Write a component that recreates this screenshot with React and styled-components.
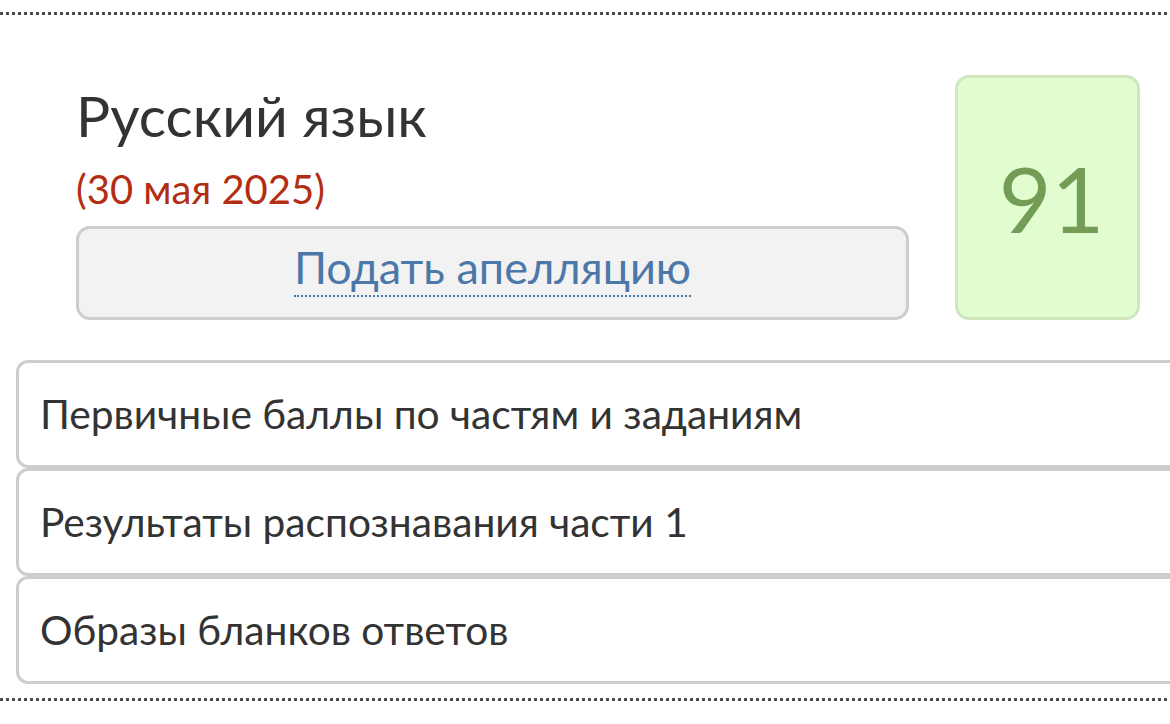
import styled, { createGlobalStyle } from 'styled-components';

const GlobalStyle = createGlobalStyle`
  html, body {
    margin: 0;
    padding: 0;
    background: #fff;
    overflow-x: hidden;
  }
  body {
    font-family: Lato, 'Open Sans', sans-serif;
    color: #333;
  }
`;

const Page = styled.main`
  padding-top: 12px;
  overflow: hidden;
`;

const Dots = styled.div`
  height: 3px;
  background-image: repeating-linear-gradient(to right, #4a4a4a 0 3px, transparent 3px 6px);
`;

const Header = styled.section`
  display: flex;
  align-items: flex-start;
  gap: 46px;
  padding: 60px 30px 40px 76px;
`;

const Info = styled.div`
  flex: 1;
  display: flex;
  flex-direction: column;
  padding-top: 4px;
`;

const Title = styled.h1`
  margin: 0;
  font-size: 57px;
  font-weight: 400;
  line-height: 72px;
  color: #333;
`;

const ExamDate = styled.div`
  margin-top: 15px;
  font-size: 40px;
  line-height: 46px;
  color: #b22d12;
`;

const AppealButton = styled.div`
  margin-top: 14px;
  height: 88px;
  box-sizing: content-box;
  display: flex;
  align-items: center;
  justify-content: center;
  background: #f2f2f2;
  border: 3px solid #cdcdcd;
  border-radius: 14px;
`;

const AppealLink = styled.a`
  font-size: 45px;
  line-height: 56px;
  margin-bottom: 10px;
  color: #4b77a9;
  text-decoration: none;
  border-bottom: 2px dotted #4b77a9;
`;

const Score = styled.div`
  box-sizing: border-box;
  width: 185px;
  height: 245px;
  flex: none;
  display: flex;
  align-items: center;
  justify-content: center;
  padding-left: 8px;
  background: #e1fdd0;
  border: 3px solid #cfe6bf;
  border-radius: 14px;
  font-size: 91px;
  color: #739c56;
`;

const Rows = styled.div`
  display: flex;
  flex-direction: column;
  margin: 0 -20px 14px 16px;
`;

const Row = styled.div`
  height: 102px;
  line-height: 102px;
  padding-left: 21px;
  border: 3px solid #cdcdcd;
  border-radius: 12px;
  font-size: 40.7px;
  color: #333;
`;

const rows = [
  'Первичные баллы по частям и заданиям',
  'Результаты распознавания части 1',
  'Образы бланков ответов',
];

const App = () => (
  <Page>
    <GlobalStyle />
    <Dots />
    <Header>
      <Info>
        <Title>Русский язык</Title>
        <ExamDate>(30 мая 2025)</ExamDate>
        <AppealButton>
          <AppealLink>Подать апелляцию</AppealLink>
        </AppealButton>
      </Info>
      <Score>91</Score>
    </Header>
    <Rows>
      {rows.map((r) => (
        <Row key={r}>{r}</Row>
      ))}
    </Rows>
    <Dots />
  </Page>
);

export default App;
